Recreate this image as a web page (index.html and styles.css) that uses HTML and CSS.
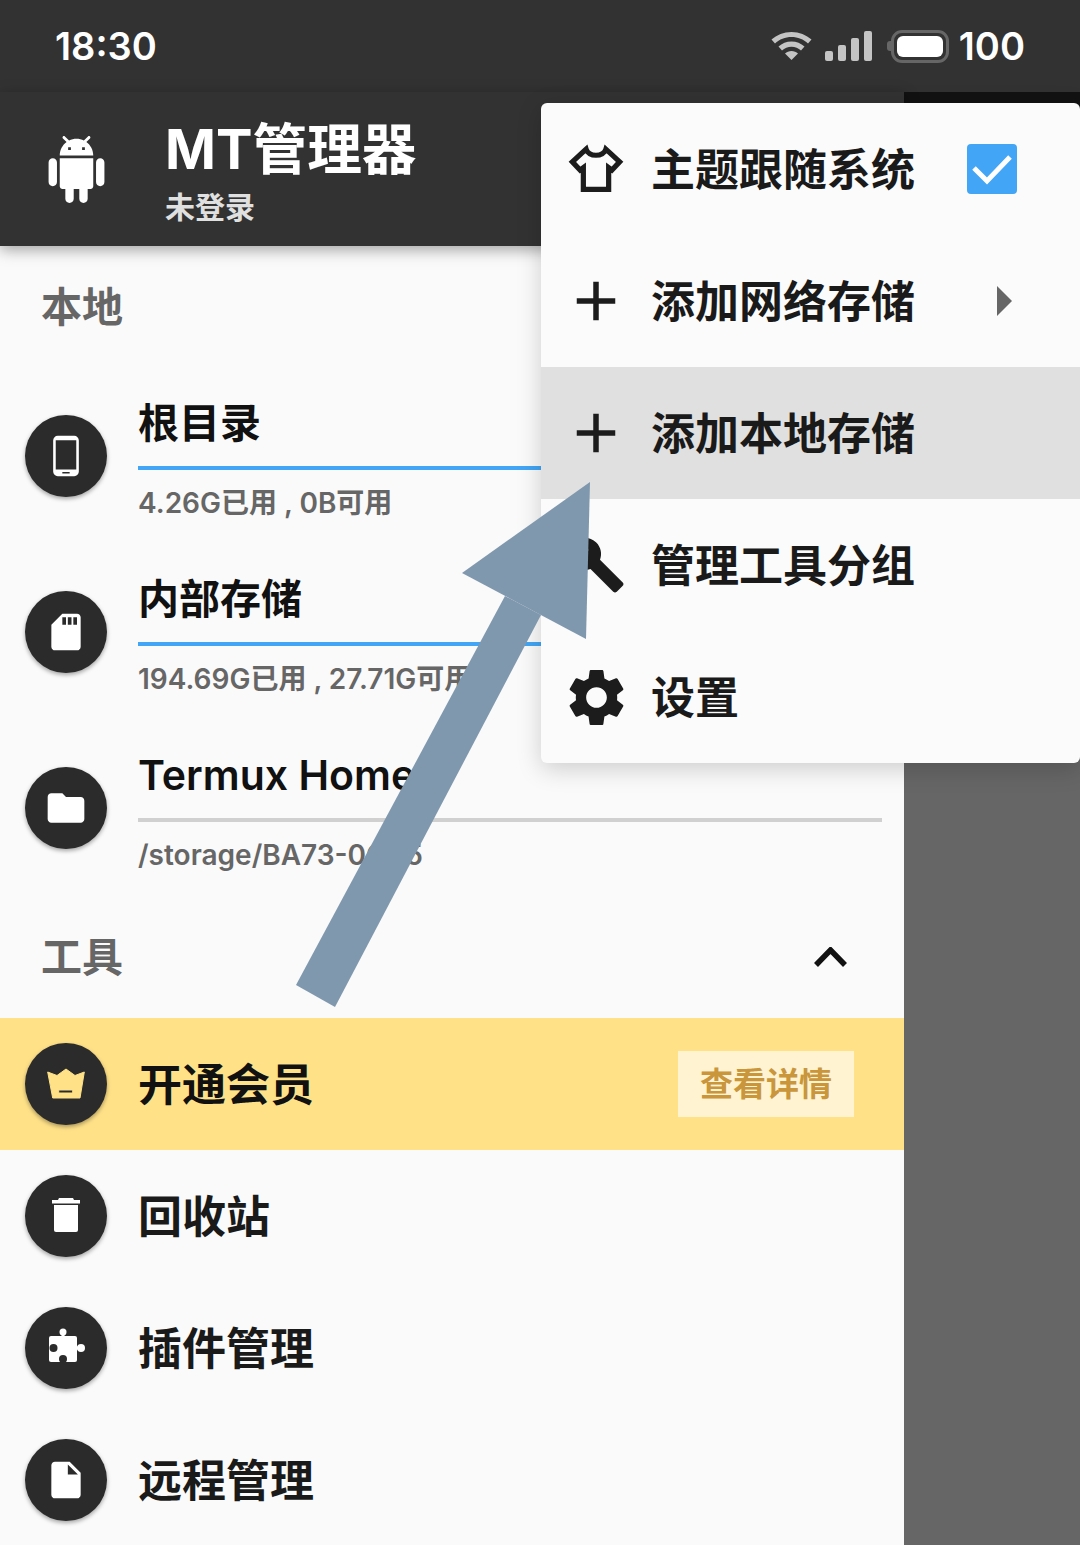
FILE: index.html
```html
<!DOCTYPE html>
<html lang="zh-CN">
<head>
    <meta charset="UTF-8">
    <meta name="viewport" content="width=device-width, initial-scale=1.0">
    <title>MT管理器</title>
    <link rel="stylesheet" href="styles.css">
</head>
<body>
<div id="page">

    <div class="status-bar">
        <span class="status-text">18:30</span>
        <div class="status-icons">
            <svg class="wifi" viewBox="0 0 41 28"><path d="M20.500 0C12.700 0 5.800 2.900 0.500 7.600L4 11.500C8.400 7.500 14.200 5.100 20.500 5.100S32.600 7.500 37 11.500L40.500 7.600C35.200 2.900 28.300 0 20.500 0z"/><path d="M20.500 9.500C15.500 9.500 11 11.400 7.500 14.500L11 18.400C13.500 16.100 16.900 14.700 20.500 14.700S27.500 16.100 30 18.400L33.500 14.500C30 11.400 25.500 9.500 20.500 9.500z"/><path d="M20.500 19C18 19 15.700 19.900 14 21.400L20.500 28L27 21.400C25.300 19.900 23 19 20.500 19z"/></svg>
            <div class="signal">
                <i class="sig sig-1"></i><i class="sig sig-2"></i><i class="sig sig-3"></i><i class="sig sig-4"></i>
            </div>
            <div class="battery"><div class="battery-cap"></div><div class="battery-body"><div class="battery-fill"></div></div></div>
            <span class="status-text">100</span>
        </div>
    </div>

    <div class="main">
        <div class="drawer">
            <div class="header">
                <svg class="android" viewBox="0 0 24 24"><path d="M6 18c0 .55.45 1 1 1h1v3.500c0 .83.67 1.500 1.500 1.500s1.500-.67 1.500-1.500V19h2v3.500c0 .83.67 1.500 1.500 1.500s1.500-.67 1.500-1.500V19h1c.55 0 1-.45 1-1V8H6v10zM3.500 8C2.670 8 2 8.670 2 9.500v7c0 .83.67 1.500 1.500 1.500S5 17.330 5 16.500v-7C5 8.670 4.330 8 3.500 8zm17 0c-.83 0-1.500.67-1.500 1.500v7c0 .83.67 1.500 1.500 1.500s1.500-.67 1.500-1.500v-7c0-.83-.67-1.500-1.500-1.500zm-4.970-5.840l1.300-1.300c.2-.2.2-.51 0-.71-.2-.2-.51-.2-.71 0l-1.480 1.480C13.850 1.230 12.950 1 12 1c-.96 0-1.860.23-2.660.63L7.850.15c-.2-.2-.51-.2-.71 0-.2.2-.2.51 0 .71l1.310 1.310C6.970 3.260 6 5.010 6 7h12c0-1.990-.97-3.750-2.470-4.840zM10 5H9V4h1v1zm5 0h-1V4h1v1z"/></svg>
                <div class="header-text">
                    <div class="app-name">MT管理器</div>
                    <div class="login">未登录</div>
                </div>
            </div>

            <div class="section-head">本地</div>

            <div class="storage-row">
                <div class="circle"><svg class="glyph" viewBox="0 0 24 24"><path fill-rule="evenodd" d="M7.500 1h9A2.500 2.500 0 0 1 19 3.500v17a2.500 2.500 0 0 1-2.500 2.500h-9A2.500 2.500 0 0 1 5 20.500v-17A2.500 2.500 0 0 1 7.500 1zM6.400 3.400v16h11.200v-16zM10 20.700v.8h4v-.8z"/></svg></div>
                <div class="storage-body">
                    <div class="storage-title">根目录</div>
                    <div class="bar bar-used"></div>
                    <div class="storage-sub">4.26G已用 , 0B可用</div>
                </div>
            </div>
            <div class="storage-row">
                <div class="circle"><svg class="glyph" viewBox="0 0 24 24"><path d="M18 2h-8L4.020 8 4 20c0 1.100.9 2 2 2h12c1.100 0 2-.9 2-2V4c0-1.100-.9-2-2-2zm-6 6h-2V4h2v4zm3 0h-2V4h2v4zm3 0h-2V4h2v4z"/></svg></div>
                <div class="storage-body">
                    <div class="storage-title">内部存储</div>
                    <div class="bar bar-used"></div>
                    <div class="storage-sub">194.69G已用 , 27.71G可用</div>
                </div>
            </div>
            <div class="storage-row">
                <div class="circle"><svg class="glyph" viewBox="0 0 24 24"><path d="M10 4H4c-1.100 0-1.990.9-1.990 2L2 18c0 1.100.9 2 2 2h16c1.100 0 2-.9 2-2V8c0-1.100-.9-2-2-2h-8l-2-2z"/></svg></div>
                <div class="storage-body">
                    <div class="storage-title">Termux Home</div>
                    <div class="bar"></div>
                    <div class="storage-sub">/storage/BA73-0CB5</div>
                </div>
            </div>

            <div class="section-head tools-head">
                <span>工具</span>
                <svg class="chevron" viewBox="0 0 33 21"><polyline points="2,18 16.500,3 31,18"/></svg>
            </div>

            <div class="tool-row vip">
                <div class="circle"><svg class="glyph crown" viewBox="0 0 44 44"><path fill-rule="evenodd" d="M3.700 10L13 13.500 22 7l9 6.500L40.300 10 36 36H8.700zM14.700 28v3h14v-3z"/></svg></div>
                <span class="tool-name">开通会员</span>
                <span class="vip-btn">查看详情</span>
            </div>
            <div class="tool-row">
                <div class="circle"><svg class="glyph" viewBox="0 0 44 44"><path d="M15 4h14l1 2h6v3.500H8V6h6z"/><path d="M10 11h24v25a2 2 0 0 1-2 2H12a2 2 0 0 1-2-2z"/></svg></div>
                <span class="tool-name">回收站</span>
            </div>
            <div class="tool-row">
                <div class="circle"><svg class="glyph" viewBox="0 0 44 44"><rect x="5" y="10" width="28" height="26" rx="2"/><circle cx="19" cy="6" r="3.500"/><rect x="17.500" y="6" width="3" height="5"/><circle cx="37" cy="22" r="4"/><rect x="32" y="20.500" width="3" height="3"/><circle class="puzzle-cut" cx="9.500" cy="22" r="4"/><circle class="puzzle-cut" cx="19" cy="33" r="4"/></svg></div>
                <span class="tool-name">插件管理</span>
            </div>
            <div class="tool-row">
                <div class="circle"><svg class="glyph" viewBox="0 0 24 24"><path d="M6 2c-1.100 0-1.990.9-1.990 2L4 20c0 1.100.89 2 1.990 2H18c1.100 0 2-.9 2-2V8l-6-6H6zm7 7V3.500L18.500 9H13z"/></svg></div>
                <span class="tool-name">远程管理</span>
            </div>
        </div>

        <div class="scrim">
            <div class="scrim-bar"></div>
        </div>
    </div>

    <div class="menu">
        <div class="menu-item">
            <svg class="menu-icon shirt" viewBox="0 0 24 24"><path d="M8.400 4.800L3.400 9.400l2.800 3 1.200-.9v7.900h9.200v-7.900l1.200.9 2.800-3-5-4.600c-.4 1.400-1.900 2.200-3.600 2.200s-3.200-.8-3.600-2.200z"/></svg>
            <span class="menu-label">主题跟随系统</span>
            <span class="checkbox"><svg viewBox="0 0 50 50"><polyline points="7,24 20,37 43,13"/></svg></span>
        </div>
        <div class="menu-item">
            <svg class="menu-icon" viewBox="0 0 24 24"><path d="M19 13h-6v6h-2v-6H5v-2h6V5h2v6h6v2z"/></svg>
            <span class="menu-label">添加网络存储</span>
            <svg class="submenu-arrow" viewBox="0 0 15 30"><polygon points="0,0 15,15 0,30"/></svg>
        </div>
        <div class="menu-item active">
            <svg class="menu-icon" viewBox="0 0 24 24"><path d="M19 13h-6v6h-2v-6H5v-2h6V5h2v6h6v2z"/></svg>
            <span class="menu-label">添加本地存储</span>
        </div>
        <div class="menu-item">
            <svg class="menu-icon wrench" viewBox="0 0 24 24"><path d="M22.700 19l-9.100-9.100c.9-2.300.4-5-1.500-6.900-2-2-5-2.400-7.400-1.300L9 6 6 9 1.600 4.700C.4 7.100.9 10.100 2.900 12.100c1.900 1.900 4.600 2.400 6.900 1.500l9.100 9.100c.4.4 1 .4 1.400 0l2.300-2.300c.5-.4.5-1.100.1-1.400z"/></svg>
            <span class="menu-label">管理工具分组</span>
        </div>
        <div class="menu-item">
            <svg class="menu-icon gear" viewBox="0 0 24 24"><path d="M19.140 12.940c.04-.3.06-.61.06-.94 0-.32-.02-.64-.07-.94l2.030-1.580c.18-.14.23-.41.12-.61l-1.920-3.320c-.12-.22-.37-.29-.59-.22l-2.390.96c-.5-.38-1.030-.7-1.620-.94l-.36-2.540c-.04-.24-.24-.41-.48-.41h-3.840c-.24 0-.43.17-.47.41l-.36 2.540c-.59.24-1.130.57-1.620.94l-2.390-.96c-.22-.08-.47 0-.59.22L2.740 8.870c-.12.21-.08.47.12.61l2.030 1.580c-.05.3-.09.63-.09.94s.02.64.07.94l-2.030 1.580c-.18.14-.23.41-.12.61l1.920 3.320c.12.22.37.29.59.22l2.390-.96c.5.38 1.030.7 1.620.94l.36 2.540c.05.24.24.41.48.41h3.840c.24 0 .44-.17.47-.41l.36-2.540c.59-.24 1.130-.56 1.620-.94l2.390.96c.22.08.47 0 .59-.22l1.920-3.320c.12-.22.07-.47-.12-.61l-2.010-1.580zM12 15.600c-1.980 0-3.600-1.620-3.600-3.600s1.620-3.600 3.600-3.600 3.600 1.620 3.600 3.600-1.620 3.600-3.600 3.600z"/></svg>
            <span class="menu-label">设置</span>
        </div>
    </div>

    <svg class="annotation" viewBox="0 0 1080 1545">
        <polygon points="505,596 296,985 335,1007 541,615"/>
        <polygon points="590,482 462,573 586,639"/>
    </svg>

</div>
</body>
</html>
```

FILE: styles.css
```css
* {
    box-sizing: border-box;
}

html, body {
    margin: 0;
    padding: 0;
}

body {
    font-family: Inter, "Noto Sans CJK SC", sans-serif;
    background-color: #666;
    color: #1a1a1a;
}

#page {
    position: relative;
    width: 1080px;
    height: 1545px;
    overflow: hidden;
    display: flex;
    flex-direction: column;
}

/* status bar */
.status-bar {
    height: 92px;
    flex: none;
    background-color: #323232;
    display: flex;
    justify-content: space-between;
    align-items: center;
    padding: 0 55px 0 55px;
}

.status-text {
    color: #fff;
    font-size: 38px;
    font-weight: 600;
    line-height: 44px;
}

.status-icons {
    display: flex;
    align-items: center;
}

.wifi {
    width: 41px;
    height: 28px;
    fill: #c4c4c4;
    margin-right: 13px;
}

.signal {
    display: flex;
    align-items: flex-end;
    gap: 5px;
    height: 30px;
    margin-right: 15px;
}

.sig {
    display: block;
    width: 8px;
    background-color: #c4c4c4;
    border-radius: 2px;
}

.sig-1 { height: 10px; }
.sig-2 { height: 16px; }
.sig-3 { height: 23px; }
.sig-4 { height: 30px; }

.battery {
    display: flex;
    align-items: center;
    margin-right: 10px;
}

.battery-cap {
    width: 4px;
    height: 10px;
    background-color: #666;
    border-radius: 3px 0 0 3px;
}

.battery-body {
    width: 58px;
    height: 33px;
    border: 3px solid #666;
    border-radius: 11px;
    padding: 3px;
}

.battery-fill {
    height: 100%;
    background-color: #fff;
    border-radius: 6px;
}

/* drawer */
.main {
    flex: 1;
    display: flex;
    min-height: 0;
}

.drawer {
    width: 904px;
    flex: none;
    background-color: #fafafa;
}

.scrim {
    flex: 1;
    background-color: #666;
}

.scrim-bar {
    height: 154px;
    background-color: #121212;
}

.header {
    position: relative;
    height: 154px;
    background-color: #323232;
    box-shadow: 0 4px 14px rgba(0, 0, 0, 0.35);
    display: flex;
    align-items: center;
    padding: 0 0 0 43px;
}

.android {
    width: 67px;
    height: 67px;
    fill: #fff;
    margin-right: 55px;
}

.header-text {
    padding-top: 6px;
}

.app-name {
    color: #fff;
    font-size: 54.700px;
    font-weight: 700;
    line-height: 64px;
}

.login {
    color: #e0e0e0;
    font-size: 30px;
    font-weight: 600;
    line-height: 40px;
    margin-top: 6px;
}

.section-head {
    height: 122px;
    padding: 0 57px 0 41px;
    font-size: 41px;
    font-weight: 600;
    color: #666;
    line-height: 122px;
}

.tools-head {
    display: flex;
    justify-content: space-between;
    align-items: center;
}

.chevron {
    width: 33px;
    height: 21px;
    fill: none;
    stroke: #111;
    stroke-width: 5.500;
}

.circle {
    width: 82px;
    height: 82px;
    flex: none;
    border-radius: 50%;
    background-color: #2b2b2b;
    box-shadow: 0 2px 4px rgba(0, 0, 0, 0.35);
    display: flex;
    align-items: center;
    justify-content: center;
}

.glyph {
    width: 44px;
    height: 44px;
    fill: #fff;
}

.crown {
    fill: #ffe288;
    stroke: #ffe288;
    stroke-width: 1;
    stroke-linejoin: round;
}

.puzzle-cut {
    fill: #2b2b2b;
}

.storage-row {
    height: 176px;
    display: flex;
    align-items: center;
    padding: 0 22px 0 25px;
}

.storage-body {
    flex: 1;
    height: 176px;
    margin-left: 31px;
    padding-top: 25px;
}

.storage-title {
    height: 60px;
    font-size: 41px;
    font-weight: 600;
    line-height: 60px;
    color: #111;
}

.bar {
    height: 4px;
    margin: 13px 0 16px;
    background-color: #d0d0d0;
}

.bar-used {
    background-color: #42a5f5;
}

.storage-sub {
    font-size: 28px;
    font-weight: 600;
    line-height: 34px;
    color: #666;
    white-space: nowrap;
}

.tool-row {
    height: 132px;
    display: flex;
    align-items: center;
    padding: 0 50px 0 25px;
}

.tool-name {
    margin-left: 31px;
    margin-bottom: 5px;
    font-size: 44px;
    font-weight: 600;
    color: #1a1a1a;
}

.vip {
    background-color: #ffe288;
    justify-content: flex-start;
}

.vip .tool-name {
    color: #111;
}

.vip-btn {
    margin-left: auto;
    width: 176px;
    height: 66px;
    background-color: #fff3d2;
    color: #c9963c;
    font-size: 33px;
    font-weight: 600;
    line-height: 66px;
    text-align: center;
}

/* popup menu */
.menu {
    position: absolute;
    left: 541px;
    top: 103px;
    width: 539px;
    height: 660px;
    background-color: #fbfbfb;
    border-radius: 6px;
    overflow: hidden;
    box-shadow: 0 6px 24px rgba(0, 0, 0, 0.18);
}

.menu-item {
    height: 132px;
    display: flex;
    align-items: center;
    padding-left: 22px;
}

.menu-item.active {
    background-color: #e0e0e0;
}

.menu-icon {
    width: 66px;
    height: 66px;
    flex: none;
    fill: #1c1c1c;
}

.shirt {
    fill: none;
    stroke: #1c1c1c;
    stroke-width: 1.900;
}

.wrench {
    width: 60px;
    height: 60px;
    margin: 0 3px;
}

.gear {
    width: 69px;
    height: 69px;
    margin: 0 -1.500px;
}

.menu-label {
    margin-left: 22px;
    margin-bottom: 5px;
    font-size: 44px;
    font-weight: 600;
    color: #1a1a1a;
}

.checkbox {
    width: 50px;
    height: 50px;
    margin-left: 52px;
    background-color: #42a5f5;
    border-radius: 4px;
}

.checkbox svg {
    display: block;
    width: 50px;
    height: 50px;
    fill: none;
    stroke: #fff;
    stroke-width: 5;
}

.submenu-arrow {
    width: 15px;
    height: 30px;
    margin-left: 82px;
    fill: #666;
}

/* arrow drawn over the screenshot */
.annotation {
    position: absolute;
    left: 0;
    top: 0;
    width: 1080px;
    height: 1545px;
    fill: #7f98ae;
    pointer-events: none;
}
```
